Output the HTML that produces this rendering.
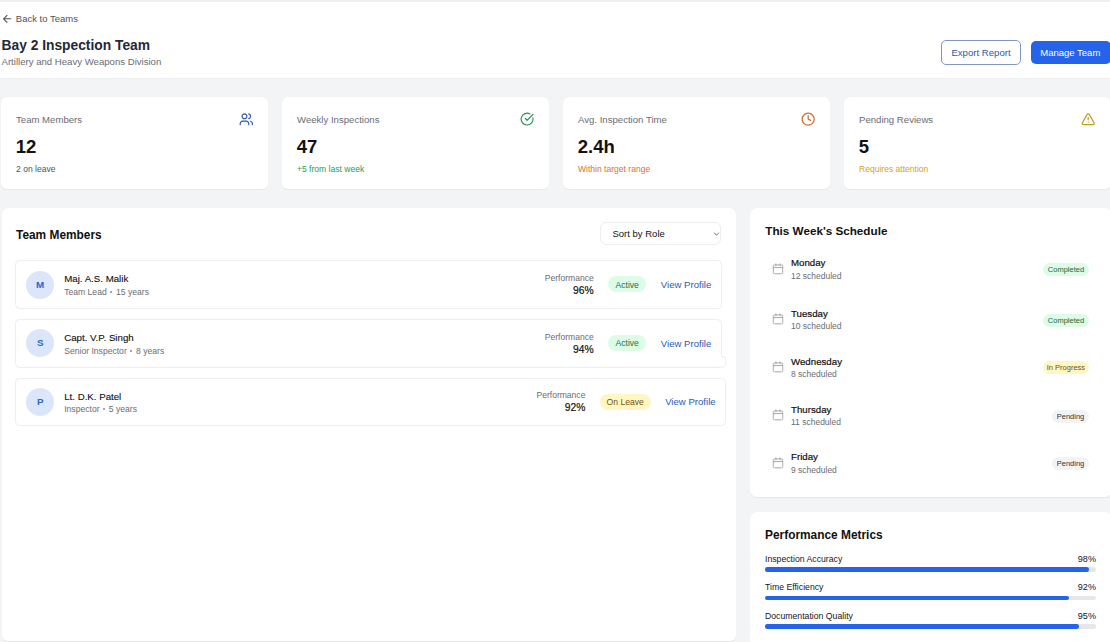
<!DOCTYPE html>
<html><head><meta charset="utf-8"><title>Bay 2 Inspection Team</title>
<style>
html,body{margin:0;padding:0;}
body{width:1110px;height:642px;overflow:hidden;position:relative;background:#f3f4f6;font-family:'Liberation Sans', sans-serif;}
</style></head><body>
<div style="position:absolute;left:0px;top:0px;width:1110px;height:2px;background:#efefef;border-radius:0px;"></div>
<div style="position:absolute;left:0px;top:2px;width:1110px;height:77px;background:#fff;border-radius:0px;border-bottom:1px solid #eceef1;box-sizing:border-box;box-shadow:0 -0.5px 0.5px rgba(0,0,0,0.04);"></div>
<svg style="position:absolute;left:0px;top:0px;overflow:visible;" width="20" height="30" viewBox="0 0 20 30" fill="none"><path d="M10.8 18.8H3.6M7.0 15.3L3.6 18.8L7.0 22.3" stroke="#505358" stroke-width="1.1" stroke-linecap="round" stroke-linejoin="round"/></svg>
<div style="position:absolute;left:15.80px;top:19.01px;font-size:9.5px;line-height:0;font-weight:400;color:#505358;white-space:nowrap;">Back to Teams</div>
<div style="position:absolute;left:1.50px;top:46.42px;font-size:13.8px;line-height:0;font-weight:700;color:#1f2937;white-space:nowrap;">Bay 2 Inspection Team</div>
<div style="position:absolute;left:1.50px;top:61.87px;font-size:9.6px;line-height:0;font-weight:400;color:#6a6d73;white-space:nowrap;">Artillery and Heavy Weapons Division</div>
<div style="position:absolute;left:941px;top:40px;width:80px;height:25px;background:#fff;border:1px solid #8198c2;box-sizing:border-box;border-radius:5px;"></div>
<div style="position:absolute;left:781.00px;width:400px;text-align:center;top:52.67px;font-size:9.6px;line-height:0;font-weight:400;color:#2f5aa8;white-space:nowrap;">Export Report</div>
<div style="position:absolute;left:1030.5px;top:40.5px;width:80px;height:23.5px;background:#2563eb;border-radius:5px;"></div>
<div style="position:absolute;left:870.30px;width:400px;text-align:center;top:52.91px;font-size:9.5px;line-height:0;font-weight:400;color:#ffffff;white-space:nowrap;">Manage Team</div>
<div style="position:absolute;left:1px;top:97.0px;width:267px;height:92px;background:#fff;border-radius:6px;box-shadow:0 0.5px 1px rgba(0,0,0,0.05);"></div>
<div style="position:absolute;left:16.00px;top:120.17px;font-size:9.6px;line-height:0;font-weight:400;color:#6a6d73;white-space:nowrap;">Team Members</div>
<div style="position:absolute;left:15.80px;top:146.89px;font-size:18.5px;line-height:0;font-weight:700;color:#111111;white-space:nowrap;">12</div>
<div style="position:absolute;left:16.00px;top:168.54px;font-size:8.55px;line-height:0;font-weight:400;color:#4b5563;white-space:nowrap;">2 on leave</div>
<div style="position:absolute;left:282px;top:97.0px;width:267px;height:92px;background:#fff;border-radius:6px;box-shadow:0 0.5px 1px rgba(0,0,0,0.05);"></div>
<div style="position:absolute;left:297.00px;top:120.17px;font-size:9.6px;line-height:0;font-weight:400;color:#6a6d73;white-space:nowrap;">Weekly Inspections</div>
<div style="position:absolute;left:296.80px;top:146.89px;font-size:18.5px;line-height:0;font-weight:700;color:#111111;white-space:nowrap;">47</div>
<div style="position:absolute;left:297.00px;top:168.54px;font-size:8.55px;line-height:0;font-weight:400;color:#22a05a;white-space:nowrap;">+5 from last week</div>
<div style="position:absolute;left:563px;top:97.0px;width:267px;height:92px;background:#fff;border-radius:6px;box-shadow:0 0.5px 1px rgba(0,0,0,0.05);"></div>
<div style="position:absolute;left:578.00px;top:120.17px;font-size:9.6px;line-height:0;font-weight:400;color:#6a6d73;white-space:nowrap;">Avg. Inspection Time</div>
<div style="position:absolute;left:577.80px;top:146.89px;font-size:18.5px;line-height:0;font-weight:700;color:#111111;white-space:nowrap;">2.4h</div>
<div style="position:absolute;left:578.00px;top:168.54px;font-size:8.55px;line-height:0;font-weight:400;color:#d97330;white-space:nowrap;">Within target range</div>
<div style="position:absolute;left:844px;top:97.0px;width:267px;height:92px;background:#fff;border-radius:6px;box-shadow:0 0.5px 1px rgba(0,0,0,0.05);"></div>
<div style="position:absolute;left:859.00px;top:120.17px;font-size:9.6px;line-height:0;font-weight:400;color:#6a6d73;white-space:nowrap;">Pending Reviews</div>
<div style="position:absolute;left:858.80px;top:146.89px;font-size:18.5px;line-height:0;font-weight:700;color:#111111;white-space:nowrap;">5</div>
<div style="position:absolute;left:859.00px;top:168.54px;font-size:8.55px;line-height:0;font-weight:400;color:#d4a514;white-space:nowrap;">Requires attention</div>
<svg style="position:absolute;left:239.0px;top:112.0px" width="14.6" height="14.6" viewBox="0 0 24 24" fill="none" stroke="#2f58a8" stroke-width="1.9" stroke-linecap="round" stroke-linejoin="round"><path d="M16 21v-2a4 4 0 0 0-4-4H6a4 4 0 0 0-4 4v2"/><circle cx="9" cy="7" r="4"/><path d="M22 21v-2a4 4 0 0 0-3-3.87"/><path d="M16 3.13a4 4 0 0 1 0 7.75"/></svg>
<svg style="position:absolute;left:519.6px;top:112.2px" width="14.2" height="14.2" viewBox="0 0 24 24" fill="none" stroke="#2f9160" stroke-width="2.0" stroke-linecap="round" stroke-linejoin="round"><path d="M21.801 10A10 10 0 1 1 17 3.335"/><path d="m9 11 3 3L22 4"/></svg>
<svg style="position:absolute;left:800.6px;top:112.0px" width="14.4" height="14.4" viewBox="0 0 24 24" fill="none" stroke="#c8702f" stroke-width="2.0" stroke-linecap="round" stroke-linejoin="round"><circle cx="12" cy="12" r="10"/><polyline points="12 6 12 12 16 14"/></svg>
<svg style="position:absolute;left:1081.4px;top:111.6px" width="14.4" height="14.4" viewBox="0 0 24 24" fill="none" stroke="#bf9722" stroke-width="2.0" stroke-linecap="round" stroke-linejoin="round"><path d="m21.73 18-8-14a2 2 0 0 0-3.48 0l-8 14A2 2 0 0 0 4 21h16a2 2 0 0 0 1.73-3"/><path d="M12 9v4"/><path d="M12 17h.01"/></svg>
<div style="position:absolute;left:1.5px;top:207.7px;width:734.5px;height:433.3px;background:#fff;border-radius:6px;box-shadow:0 0.5px 1px rgba(0,0,0,0.06);"></div>
<div style="position:absolute;left:16.00px;top:234.88px;font-size:11.9px;line-height:0;font-weight:700;color:#111111;white-space:nowrap;">Team Members</div>
<div style="position:absolute;left:599.8px;top:222.3px;width:121.4px;height:23.2px;background:#fff;border:1px solid #eceef1;box-sizing:border-box;border-radius:6px;"></div>
<div style="position:absolute;left:612.50px;top:234.21px;font-size:9.5px;line-height:0;font-weight:400;color:#111111;white-space:nowrap;">Sort by Role</div>
<svg style="position:absolute;left:700px;top:225px;overflow:visible;" width="30" height="20" viewBox="0 0 30 20" fill="none"><path d="M714.4 233L716.5 235.2L718.6 233" transform="translate(-700,-225)" stroke="#555" stroke-width="0.85" stroke-linecap="round" stroke-linejoin="round"/></svg>
<div style="position:absolute;left:15.2px;top:260.0px;width:706.8px;height:48.6px;background:#fff;border:1px solid #eceef1;box-sizing:border-box;border-radius:4.5px;"></div>
<div style="position:absolute;left:25.8px;top:270.8px;width:28.2px;height:28.2px;background:#dbe6fb;border-radius:14.1px;"></div>
<div style="position:absolute;left:-159.80px;width:400px;text-align:center;top:285.30px;font-size:9.8px;line-height:0;font-weight:700;color:#2f63c9;white-space:nowrap;">M</div>
<div style="position:absolute;left:64.20px;top:279.04px;font-size:9.7px;line-height:0;font-weight:400;color:#111111;white-space:nowrap;-webkit-text-stroke:0.12px #111;">Maj. A.S. Malik</div>
<div style="position:absolute;left:64.20px;top:292.02px;font-size:8.6px;line-height:0;font-weight:400;color:#6a6d73;white-space:nowrap;">Team Lead<span style="display:inline-block;width:2.1px;height:2.1px;border-radius:50%;background:#85888d;margin:0 3.6px;position:relative;top:-2.3px"></span>15 years</div>
<div style="position:absolute;right:398.70px;top:284.87px;font-size:9.6px;line-height:0;font-weight:400;color:#2a5bb5;white-space:nowrap;">View Profile</div>
<div style="position:absolute;left:608.0999999999999px;top:276.2px;width:38.2px;height:16.2px;background:#dcfce7;border-radius:8.1px;"></div>
<div style="position:absolute;left:427.20px;width:400px;text-align:center;top:284.62px;font-size:8.6px;line-height:0;font-weight:400;color:#257045;white-space:nowrap;">Active</div>
<div style="position:absolute;right:516.30px;top:277.74px;font-size:8.55px;line-height:0;font-weight:400;color:#6a6d73;white-space:nowrap;">Performance</div>
<div style="position:absolute;right:516.30px;top:290.73px;font-size:10.3px;line-height:0;font-weight:400;color:#111111;white-space:nowrap;-webkit-text-stroke:0.18px #111;">96%</div>
<div style="position:absolute;left:15.2px;top:318.5px;width:706.8px;height:49.3px;background:#fff;border:1px solid #eceef1;box-sizing:border-box;border-radius:4.5px;"></div>
<div style="position:absolute;left:25.8px;top:328.6px;width:28.2px;height:28.2px;background:#dbe6fb;border-radius:14.1px;"></div>
<div style="position:absolute;left:-159.80px;width:400px;text-align:center;top:343.10px;font-size:9.8px;line-height:0;font-weight:700;color:#2f63c9;white-space:nowrap;">S</div>
<div style="position:absolute;left:64.20px;top:337.54px;font-size:9.7px;line-height:0;font-weight:400;color:#111111;white-space:nowrap;-webkit-text-stroke:0.12px #111;">Capt. V.P. Singh</div>
<div style="position:absolute;left:64.20px;top:351.02px;font-size:8.6px;line-height:0;font-weight:400;color:#6a6d73;white-space:nowrap;">Senior Inspector<span style="display:inline-block;width:2.1px;height:2.1px;border-radius:50%;background:#85888d;margin:0 3.6px;position:relative;top:-2.3px"></span>8 years</div>
<div style="position:absolute;right:398.70px;top:343.72px;font-size:9.6px;line-height:0;font-weight:400;color:#2a5bb5;white-space:nowrap;">View Profile</div>
<div style="position:absolute;left:608.0999999999999px;top:335.04999999999995px;width:38.2px;height:16.2px;background:#dcfce7;border-radius:8.1px;"></div>
<div style="position:absolute;left:427.20px;width:400px;text-align:center;top:343.47px;font-size:8.6px;line-height:0;font-weight:400;color:#257045;white-space:nowrap;">Active</div>
<div style="position:absolute;right:516.30px;top:336.59px;font-size:8.55px;line-height:0;font-weight:400;color:#6a6d73;white-space:nowrap;">Performance</div>
<div style="position:absolute;right:516.30px;top:349.58px;font-size:10.3px;line-height:0;font-weight:400;color:#111111;white-space:nowrap;-webkit-text-stroke:0.18px #111;">94%</div>
<div style="position:absolute;left:15.2px;top:377.5px;width:711.0999999999999px;height:48.8px;background:#fff;border:1px solid #eceef1;box-sizing:border-box;border-radius:4.5px;"></div>
<div style="position:absolute;left:25.8px;top:387.5px;width:28.2px;height:28.2px;background:#dbe6fb;border-radius:14.1px;"></div>
<div style="position:absolute;left:-159.80px;width:400px;text-align:center;top:402.00px;font-size:9.8px;line-height:0;font-weight:700;color:#2f63c9;white-space:nowrap;">P</div>
<div style="position:absolute;left:64.20px;top:396.54px;font-size:9.7px;line-height:0;font-weight:400;color:#111111;white-space:nowrap;-webkit-text-stroke:0.12px #111;">Lt. D.K. Patel</div>
<div style="position:absolute;left:64.20px;top:409.02px;font-size:8.6px;line-height:0;font-weight:400;color:#6a6d73;white-space:nowrap;">Inspector<span style="display:inline-block;width:2.1px;height:2.1px;border-radius:50%;background:#85888d;margin:0 3.6px;position:relative;top:-2.3px"></span>5 years</div>
<div style="position:absolute;right:394.40px;top:402.47px;font-size:9.6px;line-height:0;font-weight:400;color:#2a5bb5;white-space:nowrap;">View Profile</div>
<div style="position:absolute;left:599.8px;top:393.79999999999995px;width:50.8px;height:16.2px;background:#fef6c3;border-radius:8.1px;"></div>
<div style="position:absolute;left:425.20px;width:400px;text-align:center;top:402.22px;font-size:8.6px;line-height:0;font-weight:400;color:#74560f;white-space:nowrap;">On Leave</div>
<div style="position:absolute;right:524.60px;top:395.34px;font-size:8.55px;line-height:0;font-weight:400;color:#6a6d73;white-space:nowrap;">Performance</div>
<div style="position:absolute;right:524.60px;top:408.33px;font-size:10.3px;line-height:0;font-weight:400;color:#111111;white-space:nowrap;-webkit-text-stroke:0.18px #111;">92%</div>
<svg style="position:absolute;left:0px;top:0px;overflow:visible;" width="1110" height="642" viewBox="0 0 1110 642" fill="none"><path d="M712 356.5H723.5Q726.3 356.5 726.3 359.5V363Q726.3 367.3 722 367.3H712Z" fill="#fff"/><path d="M721.5 356.5H723.5Q725.8 356.5 725.8 359.5V363Q725.8 367.3 722 367.3H712" stroke="#eceef1" stroke-width="1"/></svg>
<div style="position:absolute;left:750px;top:207.5px;width:362px;height:289.5px;background:#fff;border-radius:7px;box-shadow:0 0.5px 1px rgba(0,0,0,0.06);"></div>
<div style="position:absolute;left:765.30px;top:230.55px;font-size:11.7px;line-height:0;font-weight:700;color:#111111;white-space:nowrap;">This Week's Schedule</div>
<svg style="position:absolute;left:772px;top:263.15000000000003px;overflow:visible;" width="12" height="12" viewBox="0 0 12 12" fill="none"><rect x="1.3" y="1.9" width="9.4" height="8.9" rx="1.3" stroke="#9ca0a8" stroke-width="0.9"/><path d="M1.3 4.6H10.7M3.9 0.9V2.9M8.1 0.9V2.9" stroke="#9ca0a8" stroke-width="0.9" stroke-linecap="round"/></svg>
<div style="position:absolute;left:791.00px;top:263.44px;font-size:9.7px;line-height:0;font-weight:400;color:#111111;white-space:nowrap;-webkit-text-stroke:0.2px #111;">Monday</div>
<div style="position:absolute;left:791.00px;top:276.15px;font-size:8.5px;line-height:0;font-weight:400;color:#6a6d73;white-space:nowrap;">12 scheduled</div>
<div style="position:absolute;left:1043.2px;top:263.1px;width:45.5px;height:13px;background:#dcfce7;border-radius:6.5px;"></div>
<div style="position:absolute;left:865.95px;width:400px;text-align:center;top:270.00px;font-size:7.5px;line-height:0;font-weight:400;color:#22663e;white-space:nowrap;">Completed</div>
<svg style="position:absolute;left:772px;top:313.2px;overflow:visible;" width="12" height="12" viewBox="0 0 12 12" fill="none"><rect x="1.3" y="1.9" width="9.4" height="8.9" rx="1.3" stroke="#9ca0a8" stroke-width="0.9"/><path d="M1.3 4.6H10.7M3.9 0.9V2.9M8.1 0.9V2.9" stroke="#9ca0a8" stroke-width="0.9" stroke-linecap="round"/></svg>
<div style="position:absolute;left:791.00px;top:313.64px;font-size:9.7px;line-height:0;font-weight:400;color:#111111;white-space:nowrap;-webkit-text-stroke:0.2px #111;">Tuesday</div>
<div style="position:absolute;left:791.00px;top:326.05px;font-size:8.5px;line-height:0;font-weight:400;color:#6a6d73;white-space:nowrap;">10 scheduled</div>
<div style="position:absolute;left:1043.2px;top:313.9px;width:45.5px;height:13px;background:#dcfce7;border-radius:6.5px;"></div>
<div style="position:absolute;left:865.95px;width:400px;text-align:center;top:320.80px;font-size:7.5px;line-height:0;font-weight:400;color:#22663e;white-space:nowrap;">Completed</div>
<svg style="position:absolute;left:772px;top:361.4px;overflow:visible;" width="12" height="12" viewBox="0 0 12 12" fill="none"><rect x="1.3" y="1.9" width="9.4" height="8.9" rx="1.3" stroke="#9ca0a8" stroke-width="0.9"/><path d="M1.3 4.6H10.7M3.9 0.9V2.9M8.1 0.9V2.9" stroke="#9ca0a8" stroke-width="0.9" stroke-linecap="round"/></svg>
<div style="position:absolute;left:791.00px;top:361.64px;font-size:9.7px;line-height:0;font-weight:400;color:#111111;white-space:nowrap;-webkit-text-stroke:0.2px #111;">Wednesday</div>
<div style="position:absolute;left:791.00px;top:374.45px;font-size:8.5px;line-height:0;font-weight:400;color:#6a6d73;white-space:nowrap;">8 scheduled</div>
<div style="position:absolute;left:1043.2px;top:361.3px;width:45.5px;height:13px;background:#fef6c3;border-radius:6.5px;"></div>
<div style="position:absolute;left:865.95px;width:400px;text-align:center;top:368.20px;font-size:7.5px;line-height:0;font-weight:400;color:#6f5210;white-space:nowrap;">In Progress</div>
<svg style="position:absolute;left:772px;top:409.15px;overflow:visible;" width="12" height="12" viewBox="0 0 12 12" fill="none"><rect x="1.3" y="1.9" width="9.4" height="8.9" rx="1.3" stroke="#9ca0a8" stroke-width="0.9"/><path d="M1.3 4.6H10.7M3.9 0.9V2.9M8.1 0.9V2.9" stroke="#9ca0a8" stroke-width="0.9" stroke-linecap="round"/></svg>
<div style="position:absolute;left:791.00px;top:409.54px;font-size:9.7px;line-height:0;font-weight:400;color:#111111;white-space:nowrap;-webkit-text-stroke:0.2px #111;">Thursday</div>
<div style="position:absolute;left:791.00px;top:422.05px;font-size:8.5px;line-height:0;font-weight:400;color:#6a6d73;white-space:nowrap;">11 scheduled</div>
<div style="position:absolute;left:1052.3px;top:409.8px;width:36.4px;height:13px;background:#f2f3f5;border-radius:6.5px;"></div>
<div style="position:absolute;left:870.50px;width:400px;text-align:center;top:416.70px;font-size:7.5px;line-height:0;font-weight:400;color:#303338;white-space:nowrap;">Pending</div>
<svg style="position:absolute;left:772px;top:456.95px;overflow:visible;" width="12" height="12" viewBox="0 0 12 12" fill="none"><rect x="1.3" y="1.9" width="9.4" height="8.9" rx="1.3" stroke="#9ca0a8" stroke-width="0.9"/><path d="M1.3 4.6H10.7M3.9 0.9V2.9M8.1 0.9V2.9" stroke="#9ca0a8" stroke-width="0.9" stroke-linecap="round"/></svg>
<div style="position:absolute;left:791.00px;top:457.44px;font-size:9.7px;line-height:0;font-weight:400;color:#111111;white-space:nowrap;-webkit-text-stroke:0.2px #111;">Friday</div>
<div style="position:absolute;left:791.00px;top:469.75px;font-size:8.5px;line-height:0;font-weight:400;color:#6a6d73;white-space:nowrap;">9 scheduled</div>
<div style="position:absolute;left:1052.3px;top:457.4px;width:36.4px;height:13px;background:#f2f3f5;border-radius:6.5px;"></div>
<div style="position:absolute;left:870.50px;width:400px;text-align:center;top:464.30px;font-size:7.5px;line-height:0;font-weight:400;color:#303338;white-space:nowrap;">Pending</div>
<div style="position:absolute;left:750px;top:512px;width:362px;height:140px;background:#fff;border-radius:7px;box-shadow:0 0.5px 1px rgba(0,0,0,0.06);"></div>
<div style="position:absolute;left:765.00px;top:534.88px;font-size:11.9px;line-height:0;font-weight:700;color:#111111;white-space:nowrap;">Performance Metrics</div>
<div style="position:absolute;left:765.00px;top:559.19px;font-size:8.7px;line-height:0;font-weight:400;color:#161616;white-space:nowrap;">Inspection Accuracy</div>
<div style="position:absolute;right:14.00px;top:559.05px;font-size:9.1px;line-height:0;font-weight:400;color:#161616;white-space:nowrap;">98%</div>
<div style="position:absolute;left:764.5px;top:567.2px;width:331.5px;height:4.6px;background:#e5e7eb;border-radius:2.3px;"></div>
<div style="position:absolute;left:764.5px;top:567.2px;width:324.87px;height:4.6px;background:#2563eb;border-radius:2.3px;"></div>
<div style="position:absolute;left:765.00px;top:587.29px;font-size:8.7px;line-height:0;font-weight:400;color:#161616;white-space:nowrap;">Time Efficiency</div>
<div style="position:absolute;right:14.00px;top:587.15px;font-size:9.1px;line-height:0;font-weight:400;color:#161616;white-space:nowrap;">92%</div>
<div style="position:absolute;left:764.5px;top:595.6px;width:331.5px;height:4.6px;background:#e5e7eb;border-radius:2.3px;"></div>
<div style="position:absolute;left:764.5px;top:595.6px;width:304.98px;height:4.6px;background:#2563eb;border-radius:2.3px;"></div>
<div style="position:absolute;left:765.00px;top:616.19px;font-size:8.7px;line-height:0;font-weight:400;color:#161616;white-space:nowrap;">Documentation Quality</div>
<div style="position:absolute;right:14.00px;top:616.05px;font-size:9.1px;line-height:0;font-weight:400;color:#161616;white-space:nowrap;">95%</div>
<div style="position:absolute;left:764.5px;top:624.1px;width:331.5px;height:4.6px;background:#e5e7eb;border-radius:2.3px;"></div>
<div style="position:absolute;left:764.5px;top:624.1px;width:314.925px;height:4.6px;background:#2563eb;border-radius:2.3px;"></div>
</body></html>
